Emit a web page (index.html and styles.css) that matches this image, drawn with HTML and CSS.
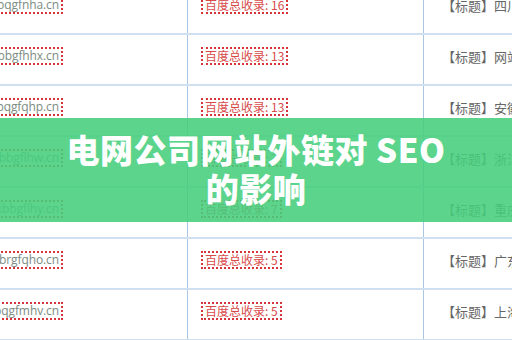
FILE: index.html
```html
<!DOCTYPE html>
<html lang="zh">
<head>
<meta charset="utf-8">
<link rel="stylesheet" href="styles.css">
</head>
<body>
<div class="page">
  <div class="table">
    <div class="row">
      <div class="cell c1"><span class="dom">bqgfnha.cn</span></div>
      <div class="cell c2"><span class="cnt">百度总收录: 16</span></div>
      <div class="cell c3"><span class="ttl">【标题】四川新闻网站</span></div>
    </div>
    <div class="row">
      <div class="cell c1"><span class="dom">xbbgfhhx.cn</span></div>
      <div class="cell c2"><span class="cnt">百度总收录: 13</span></div>
      <div class="cell c3"><span class="ttl">【标题】网站建设</span></div>
    </div>
    <div class="row">
      <div class="cell c1"><span class="dom">bqgfqhp.cn</span></div>
      <div class="cell c2"><span class="cnt">百度总收录: 13</span></div>
      <div class="cell c3"><span class="ttl">【标题】安徽新闻</span></div>
    </div>
    <div class="row">
      <div class="cell c1"><span class="dom">xbbgflhw.cn</span></div>
      <div class="cell c2"><span class="cnt">百度总收录: 7</span></div>
      <div class="cell c3"><span class="ttl">【标题】浙江新闻</span></div>
    </div>
    <div class="row">
      <div class="cell c1"><span class="dom">xbbgflhy.cn</span></div>
      <div class="cell c2"><span class="cnt">百度总收录: 7</span></div>
      <div class="cell c3"><span class="ttl">【标题】重庆新闻</span></div>
    </div>
    <div class="row">
      <div class="cell c1"><span class="dom">brgfqho.cn</span></div>
      <div class="cell c2"><span class="cnt">百度总收录: 5</span></div>
      <div class="cell c3"><span class="ttl">【标题】广东新闻</span></div>
    </div>
    <div class="row">
      <div class="cell c1"><span class="dom">bqgfmhv.cn</span></div>
      <div class="cell c2"><span class="cnt">百度总收录: 5</span></div>
      <div class="cell c3"><span class="ttl">【标题】上海新闻</span></div>
    </div>
  </div>
  <div class="banner">
    <h1 class="title">电网公司网站外链对 SEO<br>的影响</h1>
  </div>
</div>
</body>
</html>
```

FILE: styles.css
```css
* { box-sizing: border-box; }
html, body {
  margin: 0;
  padding: 0;
  width: 512px;
  height: 340px;
  overflow: hidden;
  background: #ffffff;
}
.page {
  position: relative;
  width: 512px;
  height: 340px;
  overflow: hidden;
  font-family: "Open Sans", "Noto Sans CJK SC", sans-serif;
}
.table {
  margin-top: -16px;
  display: flex;
  flex-direction: column;
}
.row {
  display: grid;
  grid-template-columns: 187px 236px 1fr;
  height: 51px;
  border-bottom: 2px solid #cfe0f0;
}
.cell {
  display: flex;
  align-items: center;
  padding-bottom: 7px;
  white-space: nowrap;
}
.c1 {
  justify-content: flex-end;
  padding-right: 124px;
}
.c2 {
  border-left: 1px solid #a9c6e3;
  padding-left: 13px;
}
.c3 {
  border-left: 1px solid #a9c6e3;
  padding-left: 18px;
  overflow: hidden;
}
.dom {
  font-size: 12px;
  letter-spacing: -0.1px;
  color: #7b8c82;
  border: 2px dotted #d8343c;
  padding: 0 2px 0 1px;
  line-height: 14px;
}
.cnt {
  font-family: "Noto Sans CJK SC", sans-serif;
  font-size: 12px;
  color: #d84a4a;
  border: 2px dotted #d8343c;
  padding: 0 2px;
  line-height: 14px;
}
.ttl {
  font-family: "Noto Sans CJK SC", sans-serif;
  font-size: 13px;
  color: #666666;
  line-height: 15px;
}
.banner {
  position: absolute;
  left: 0;
  top: 118px;
  width: 512px;
  height: 104px;
  background: rgba(70, 206, 124, 0.88);
  display: flex;
  align-items: center;
  justify-content: center;
}
.title {
  margin: 0 0 2px 0;
  font-family: "Noto Sans CJK SC", sans-serif;
  font-weight: 900;
  font-size: 33px;
  line-height: 39px;
  letter-spacing: 0.5px;
  color: #ffffff;
  text-align: center;
}
```
